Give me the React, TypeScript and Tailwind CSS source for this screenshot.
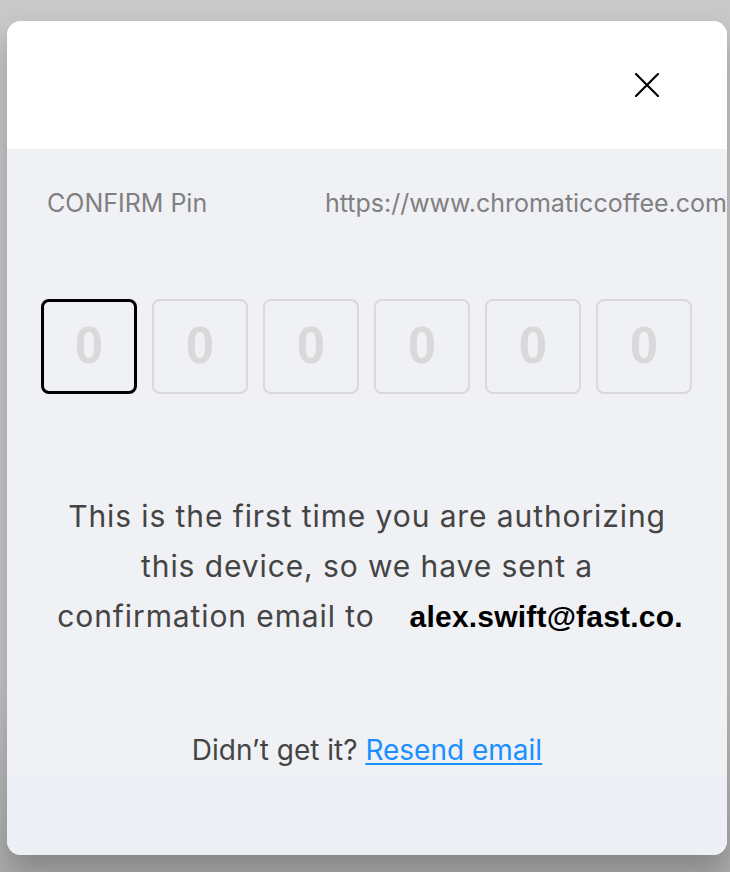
import React from "react";

export default function App() {
  const digits = [0, 1, 2, 3, 4, 5];
  return (
    <div className="w-[730px] h-[872px] bg-[#c9c9c9] overflow-hidden relative" style={{ fontFamily: "Inter, 'Noto Sans', sans-serif" }}>
      <div className="absolute left-0 right-0 bottom-0 h-[200px] bg-gradient-to-b from-[#c9c9c9] to-[#adadad]" />
      <div className="relative ml-[7px] mt-[21px] w-[720px] h-[834px] rounded-[14px] overflow-hidden bg-[#f0f1f5] shadow-[0_16px_30px_rgba(0,0,0,0.25)] flex flex-col">
        <div className="h-[128px] bg-white flex items-center justify-end pr-[68px]">
          <svg width="24" height="24" viewBox="0 0 24 24" fill="none" stroke="#000" strokeWidth="2.2" strokeLinecap="round">
            <path d="M1 1 L23 23 M23 1 L1 23" />
          </svg>
        </div>
        <div className="flex items-center h-[110px] whitespace-nowrap text-[25px] text-[#808080]">
          <span className="ml-[40px] w-[282px]">CONFIRM Pin</span>
          <span>https://www.chromaticcoffee.com</span>
        </div>
        <div className="flex gap-[15px] ml-[34px] mt-[40px]">
          {digits.map((d) => (
            <div
              key={d}
              className={
                d === 0
                  ? "w-[96px] h-[95px] rounded-[8px] border-[3px] border-black flex items-center justify-center"
                  : "w-[96px] h-[95px] rounded-[8px] border-2 border-[#d9d9d9] flex items-center justify-center"
              }
            >
              <span className="text-[51px] font-bold text-[#d9d9d9]" style={{ fontFamily: "'Liberation Sans', Arial, sans-serif" }}>0</span>
            </div>
          ))}
        </div>
        <div className="mt-[97px] text-center text-[30px] leading-[50px] text-[#444444] tracking-[0.9px]">
          <div>This is the first time you are authorizing</div>
          <div>this device, so we have sent a</div>
          <div className="flex justify-center items-baseline pl-[6px]">
            <span>confirmation email to</span>
            <span className="ml-[35px] text-[30px] font-bold text-black tracking-[0.2px]" style={{ fontFamily: "'Liberation Sans', Arial, sans-serif" }}>alex.swift@fast.co.</span>
          </div>
        </div>
        <div className="mt-[87px] text-center text-[28px] text-[#444444]">
          Didn’t get it? <a className="text-[#1a8fff] underline underline-offset-[3px]">Resend email</a>
        </div>
        <div className="flex-1 mt-[5px] bg-[#ecf0f4]" />
      </div>
    </div>
  );
}
